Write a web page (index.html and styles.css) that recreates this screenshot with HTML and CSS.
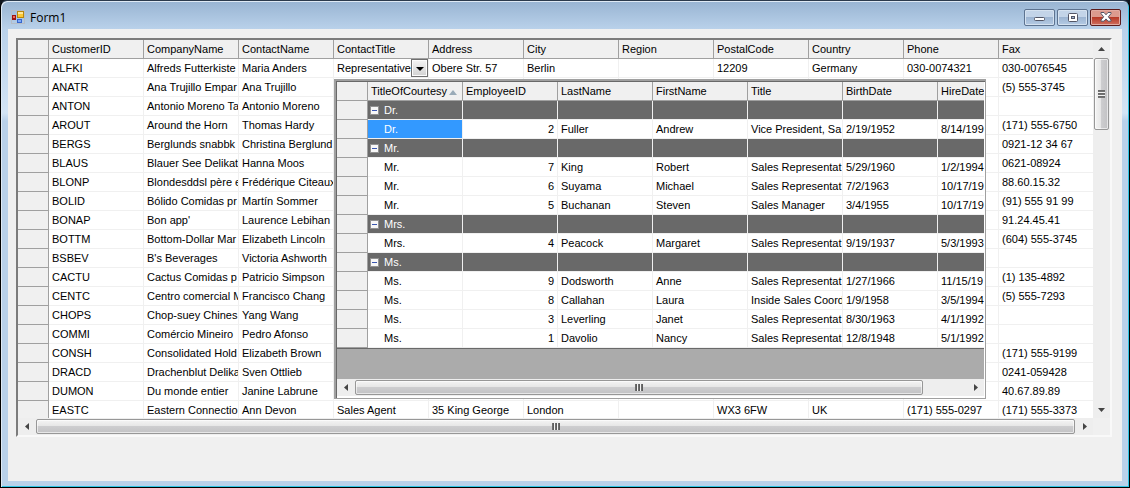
FILE: index.html
```html
<!DOCTYPE html>
<html lang="en">
    <head>
        <meta charset="UTF-8">
        <meta name="viewport" content="width=device-width, initial-scale=1.0">
        <title>Form1</title>
        <link rel="stylesheet" href="styles.css">
    </head>

    <body>
        <div class="window">
            <header class="titlebar">
                <svg class="app-icon" width="14" height="14" viewBox="0 0 14 14">
                    <rect x="0.5" y="0.5" width="13" height="13" fill="none" stroke="#b5bcc6"/>
                    <rect x="6.5" y="1.5" width="6" height="6" fill="#fdc935" stroke="#b8860b"/>
                    <rect x="7" y="2" width="5" height="2" fill="#ffe79a"/>
                    <rect x="1" y="5" width="4" height="5" fill="#9c1512"/>
                    <rect x="2" y="6" width="2" height="2" fill="#ee6a58"/>
                    <rect x="6" y="9" width="5" height="4" fill="#3566cf"/>
                    <rect x="7" y="10" width="3" height="2" fill="#7fa8f5"/>
                </svg>
                <h1>Form1</h1>
                <div class="window-buttons">
                    <button type="button" aria-label="Minimize">
                        <svg width="12" height="9" viewBox="0 0 12 9"><rect x="0.5" y="4.5" width="10" height="3" rx="1" fill="#fff" stroke="#535666"/></svg>
                    </button>
                    <button type="button" aria-label="Maximize">
                        <svg width="12" height="9" viewBox="0 0 12 9"><rect x="1.5" y="0.5" width="9" height="8" rx="1" fill="#fff" stroke="#535666"/><rect x="4.5" y="3.5" width="3" height="2" fill="#9fb5d0" stroke="#535666"/></svg>
                    </button>
                    <button type="button" class="close" aria-label="Close">
                        <svg width="12" height="10" viewBox="0 0 12 10"><path d="M1 .5H4L6 2.8L8 .5H11V1.6L8.3 4.8L11 8V9.2H8L6 6.9L4 9.2H1V8L3.7 4.8L1 1.6Z" fill="#fff" stroke="#535666"/></svg>
                    </button>
                </div>
            </header>

            <main class="client">
                <div class="grid">
                    <div class="viewport">
                        <table id="customers" class="data"></table>
                    </div>
                    <div class="scroll vertical">
                        <button type="button" aria-label="Scroll up"><svg width="7" height="4" viewBox="0 0 7 4"><path d="M0 4L3.5 0L7 4Z"/></svg></button>
                        <div class="track"><div class="thumb"><i class="grip"></i></div></div>
                        <button type="button" aria-label="Scroll down"><svg width="7" height="4" viewBox="0 0 7 4"><path d="M0 0H7L3.5 4Z"/></svg></button>
                    </div>
                    <div class="scroll horizontal">
                        <button type="button" aria-label="Scroll left"><svg width="4" height="7" viewBox="0 0 4 7"><path d="M4 0V7L0 3.5Z"/></svg></button>
                        <div class="track"><div class="thumb"><i class="grip"></i></div></div>
                        <button type="button" aria-label="Scroll right"><svg width="4" height="7" viewBox="0 0 4 7"><path d="M0 0L4 3.5L0 7Z"/></svg></button>
                    </div>

                    <div class="popup">
                        <div class="viewport">
                            <table id="employees" class="data"></table>
                        </div>
                        <div class="scroll horizontal">
                            <button type="button" aria-label="Scroll left"><svg width="4" height="7" viewBox="0 0 4 7"><path d="M4 0V7L0 3.5Z"/></svg></button>
                            <div class="track"><div class="thumb"><i class="grip"></i></div></div>
                            <button type="button" aria-label="Scroll right"><svg width="4" height="7" viewBox="0 0 4 7"><path d="M0 0L4 3.5L0 7Z"/></svg></button>
                        </div>
                    </div>
                </div>
            </main>
        </div>

        <script>
            const customerColumns = ['CustomerID', 'CompanyName', 'ContactName', 'ContactTitle', 'Address', 'City', 'Region', 'PostalCode', 'Country', 'Phone', 'Fax'];

            // id, company, contact, fax
            const customers = [
                ['ALFKI', 'Alfreds Futterkiste', 'Maria Anders', '030-0076545'],
                ['ANATR', 'Ana Trujillo Empar', 'Ana Trujillo', '(5) 555-3745'],
                ['ANTON', 'Antonio Moreno Ta', 'Antonio Moreno', ''],
                ['AROUT', 'Around the Horn', 'Thomas Hardy', '(171) 555-6750'],
                ['BERGS', 'Berglunds snabbk', 'Christina Berglund', '0921-12 34 67'],
                ['BLAUS', 'Blauer See Delikat', 'Hanna Moos', '0621-08924'],
                ['BLONP', 'Blondesddsl père e', 'Frédérique Citeaux', '88.60.15.32'],
                ['BOLID', 'Bólido Comidas pr', 'Martín Sommer', '(91) 555 91 99'],
                ['BONAP', "Bon app'", 'Laurence Lebihan', '91.24.45.41'],
                ['BOTTM', 'Bottom-Dollar Mar', 'Elizabeth Lincoln', '(604) 555-3745'],
                ['BSBEV', "B's Beverages", 'Victoria Ashworth', ''],
                ['CACTU', 'Cactus Comidas p', 'Patricio Simpson', '(1) 135-4892'],
                ['CENTC', 'Centro comercial M', 'Francisco Chang', '(5) 555-7293'],
                ['CHOPS', 'Chop-suey Chines', 'Yang Wang', ''],
                ['COMMI', 'Comércio Mineiro', 'Pedro Afonso', ''],
                ['CONSH', 'Consolidated Hold', 'Elizabeth Brown', '(171) 555-9199'],
                ['DRACD', 'Drachenblut Delika', 'Sven Ottlieb', '0241-059428'],
                ['DUMON', 'Du monde entier', 'Janine Labrune', '40.67.89.89'],
                ['EASTC', 'Eastern Connectio', 'Ann Devon', '(171) 555-3373']
            ];

            const combo = '<select class="combo" aria-label="ContactTitle"><option>Representative</option></select><span class="combo-arrow"></span>';
            const details = {
                ALFKI: [combo, 'Obere Str. 57', 'Berlin', '', '12209', 'Germany', '030-0074321'],
                EASTC: ['Sales Agent', '35 King George', 'London', '', 'WX3 6FW', 'UK', '(171) 555-0297']
            };

            const employeeColumns = ['TitleOfCourtesy', 'EmployeeID', 'LastName', 'FirstName', 'Title', 'BirthDate', 'HireDate'];
            const employees = [
                ['Dr.', 2, 'Fuller', 'Andrew', 'Vice President, Sa', '2/19/1952', '8/14/199'],
                ['Mr.', 7, 'King', 'Robert', 'Sales Representat', '5/29/1960', '1/2/1994'],
                ['Mr.', 6, 'Suyama', 'Michael', 'Sales Representat', '7/2/1963', '10/17/19'],
                ['Mr.', 5, 'Buchanan', 'Steven', 'Sales Manager', '3/4/1955', '10/17/19'],
                ['Mrs.', 4, 'Peacock', 'Margaret', 'Sales Representat', '9/19/1937', '5/3/1993'],
                ['Ms.', 9, 'Dodsworth', 'Anne', 'Sales Representat', '1/27/1966', '11/15/19'],
                ['Ms.', 8, 'Callahan', 'Laura', 'Inside Sales Coord', '1/9/1958', '3/5/1994'],
                ['Ms.', 3, 'Leverling', 'Janet', 'Sales Representat', '8/30/1963', '4/1/1992'],
                ['Ms.', 1, 'Davolio', 'Nancy', 'Sales Representat', '12/8/1948', '5/1/1992']
            ];

            function header(columns) {
                return '<thead><tr><th class="row-head"></th>' + columns.map(c => `<th scope="col">${c}</th>`).join('') + '</tr></thead>';
            }

            function row(cells, className) {
                return `<tr class="${className}"><th class="row-head"></th>` + cells.map(c => `<td>${c}</td>`).join('') + '</tr>';
            }

            const blank = Array(7).fill('');
            document.getElementById('customers').innerHTML = header(customerColumns) + '<tbody>' +
                customers.map(([id, company, contact, fax]) => row([id, company, contact, ...(details[id] || blank), fax], '')).join('') +
                '</tbody>';

            let body = '';
            let group = '';
            employees.forEach((employee, i) => {
                if (employee[0] !== group) {
                    group = employee[0];
                    const toggle = `<button type="button" class="toggle" aria-label="Collapse ${group}"></button>${group}`;
                    body += row([toggle, '', '', '', '', '', ''], 'group');
                }
                body += row(employee, i === 0 ? 'selected' : '');
            });
            document.getElementById('employees').innerHTML = header(employeeColumns) + '<tbody>' + body + '</tbody>';
            document.querySelector('#employees th[scope]').classList.add('sorted');
        </script>
    </body>
</html>
```
FILE: styles.css
```css
* {
    box-sizing: border-box;
}
body {
    margin: 0;
    background-color: #10161f;
    font-family: "Liberation Sans", Arial, sans-serif;
    font-size: 11px;
    color: #000;
}
button {
    padding: 0;
    border: none;
    background: none;
}
.window {
    display: flex;
    flex-direction: column;
    height: 100vh;
    padding: 0 6px 6px;
    border: 1px solid #000;
    border-top-color: #2b3a4c;
    border-radius: 7px 7px 0 0;
    background: linear-gradient(#98b4d2, #b9d1ea 28px, #d3e4f5 112px, #b9d1ea 120px);
    box-shadow: inset 1px 1px #dfeaf5, inset -1px -1px #2fc4e4;
}

/* title bar */
.titlebar {
    display: flex;
    align-items: center;
    flex: none;
    height: 28px;
    padding: 4px 2px 0 4px;
}
.titlebar h1 {
    flex: 1;
    margin: 0 0 0 5px;
    font-family: "Open Sans", sans-serif;
    font-size: 12px;
    font-weight: normal;
}
.window-buttons {
    display: flex;
    gap: 2px;
}
.window-buttons button {
    display: flex;
    align-items: center;
    justify-content: center;
    width: 31px;
    height: 17px;
    border: 1px solid #5d7390;
    border-radius: 2px;
    background: linear-gradient(#c3d4e8 50%, #9db5d2 50%, #b5cbe4);
    box-shadow: inset 0 0 0 1px #d5e2f0;
}
.window-buttons .close {
    border-color: #5c1c1c;
    background: linear-gradient(#dc9a8e 50%, #b83a28 50%, #cf7060);
    box-shadow: inset 0 0 0 1px #e2aba2;
}

.client {
    display: flex;
    flex: 1;
    min-height: 0;
    margin: 0 1px;
    padding: 9px 10px 44px 8px;
    background-color: #f0f0f0;
}

/* data grid */
.grid {
    position: relative;
    display: grid;
    grid-template-columns: minmax(0, 1fr) 17px;
    grid-template-rows: minmax(0, 1fr) 17px;
    flex: 1;
    min-width: 0;
    border: 2px solid #a0a0a0;
    border-color: #7c7c7c #f9f9f9 #f9f9f9 #7c7c7c;
}
.viewport {
    overflow: hidden;
    background-color: #ababab;
}
.data {
    width: 0;
    border-collapse: separate;
    border-spacing: 0;
    table-layout: fixed;
    background-color: #fff;
}
.data th, .data td {
    width: 95px;
    height: 19px;
    padding: 0 0 0 3px;
    overflow: hidden;
    border-right: 1px solid #f0f0f0;
    border-bottom: 1px solid #f0f0f0;
    font-weight: normal;
    line-height: 18px;
    text-align: left;
    white-space: nowrap;
}
.data th {
    border-color: #a0a0a0;
    background-color: #f0f0f0;
}
.data .row-head {
    width: 31px;
}
.data td {
    position: relative;
}

/* drop-down cell */
.combo {
    display: block;
    width: 88px;
    height: 18px;
    padding: 0;
    border: none;
    appearance: none;
    background-color: #fff;
    font: inherit;
    color: inherit;
}
.combo-arrow {
    position: absolute;
    top: 0;
    right: 0;
    width: 17px;
    height: 18px;
    border: 1px solid #707070;
    background: linear-gradient(#f5f5f5, #d2d2d2);
    box-shadow: inset 0 0 0 1px #fcfcfc;
    pointer-events: none;
}
.combo-arrow::after {
    content: "";
    position: absolute;
    top: 7px;
    left: 4px;
    border: 4px solid transparent;
    border-top-color: #000;
    border-bottom: none;
}

/* drop-down list */
.popup {
    position: absolute;
    top: 39px;
    left: 316px;
    display: flex;
    flex-direction: column;
    width: 652px;
    height: 320px;
    border: 1px solid #a0a0a0;
    background-color: #fff;
    box-shadow: inset 1px 1px #a0a0a0, inset 2px 2px #696969;
    padding: 2px 1px 2px 2px;
}
.popup .viewport {
    flex: 1;
}
.popup .data {
    border-bottom: 1px solid #696969;
}
.sorted::after {
    content: "";
    display: inline-block;
    margin-left: 2px;
    border: 4px solid transparent;
    border-top: none;
    border-bottom: 5px solid #9aabb8;
}
#employees td:nth-child(2) {
    padding-left: 16px;
}
#employees td:nth-child(3) {
    padding-right: 3px;
    text-align: right;
}
.data .group td {
    background-color: #696969;
    color: #fff;
}
.data .selected td:nth-child(2) {
    background-color: #3399ff;
    color: #fff;
}
.toggle {
    position: absolute;
    top: 5px;
    left: 2px;
    width: 9px;
    height: 9px;
    border: 1px solid #919191;
    background: linear-gradient(#3a56b0, #3a56b0) center / 5px 1px no-repeat #f7f7f7;
}

/* scroll bars */
.scroll {
    display: flex;
    background-color: #eeeeee;
}
.scroll button {
    display: flex;
    align-items: center;
    justify-content: center;
    flex: none;
    width: 17px;
    height: 17px;
    fill: #444;
}
.vertical {
    flex-direction: column;
}
.track {
    flex: 1;
    padding: 1px;
}
.thumb {
    display: flex;
    align-items: center;
    justify-content: center;
    height: 15px;
    border: 1px solid #979797;
    border-radius: 2px;
    background: linear-gradient(#f4f4f4, #e6e6e6 45%, #cdcdcf 50%, #c2c2c4);
    box-shadow: inset 0 0 0 1px rgba(255, 255, 255, 0.6);
}
.vertical .thumb {
    width: 15px;
    height: 21%;
    background: linear-gradient(90deg, #f4f4f4, #e6e6e6 45%, #cdcdcf 50%, #c2c2c4);
}
.popup .scroll {
    height: 17px;
}
.popup .thumb {
    width: 93%;
}
.grip {
    width: 8px;
    height: 7px;
    background: repeating-linear-gradient(90deg, #777 0, #555 2px, #f4f4f4 2px, #f4f4f4 3px);
}
.vertical .grip {
    width: 7px;
    height: 8px;
    background: repeating-linear-gradient(#666 0, #777 2px, #f4f4f4 2px, #f4f4f4 3px);
}
```
